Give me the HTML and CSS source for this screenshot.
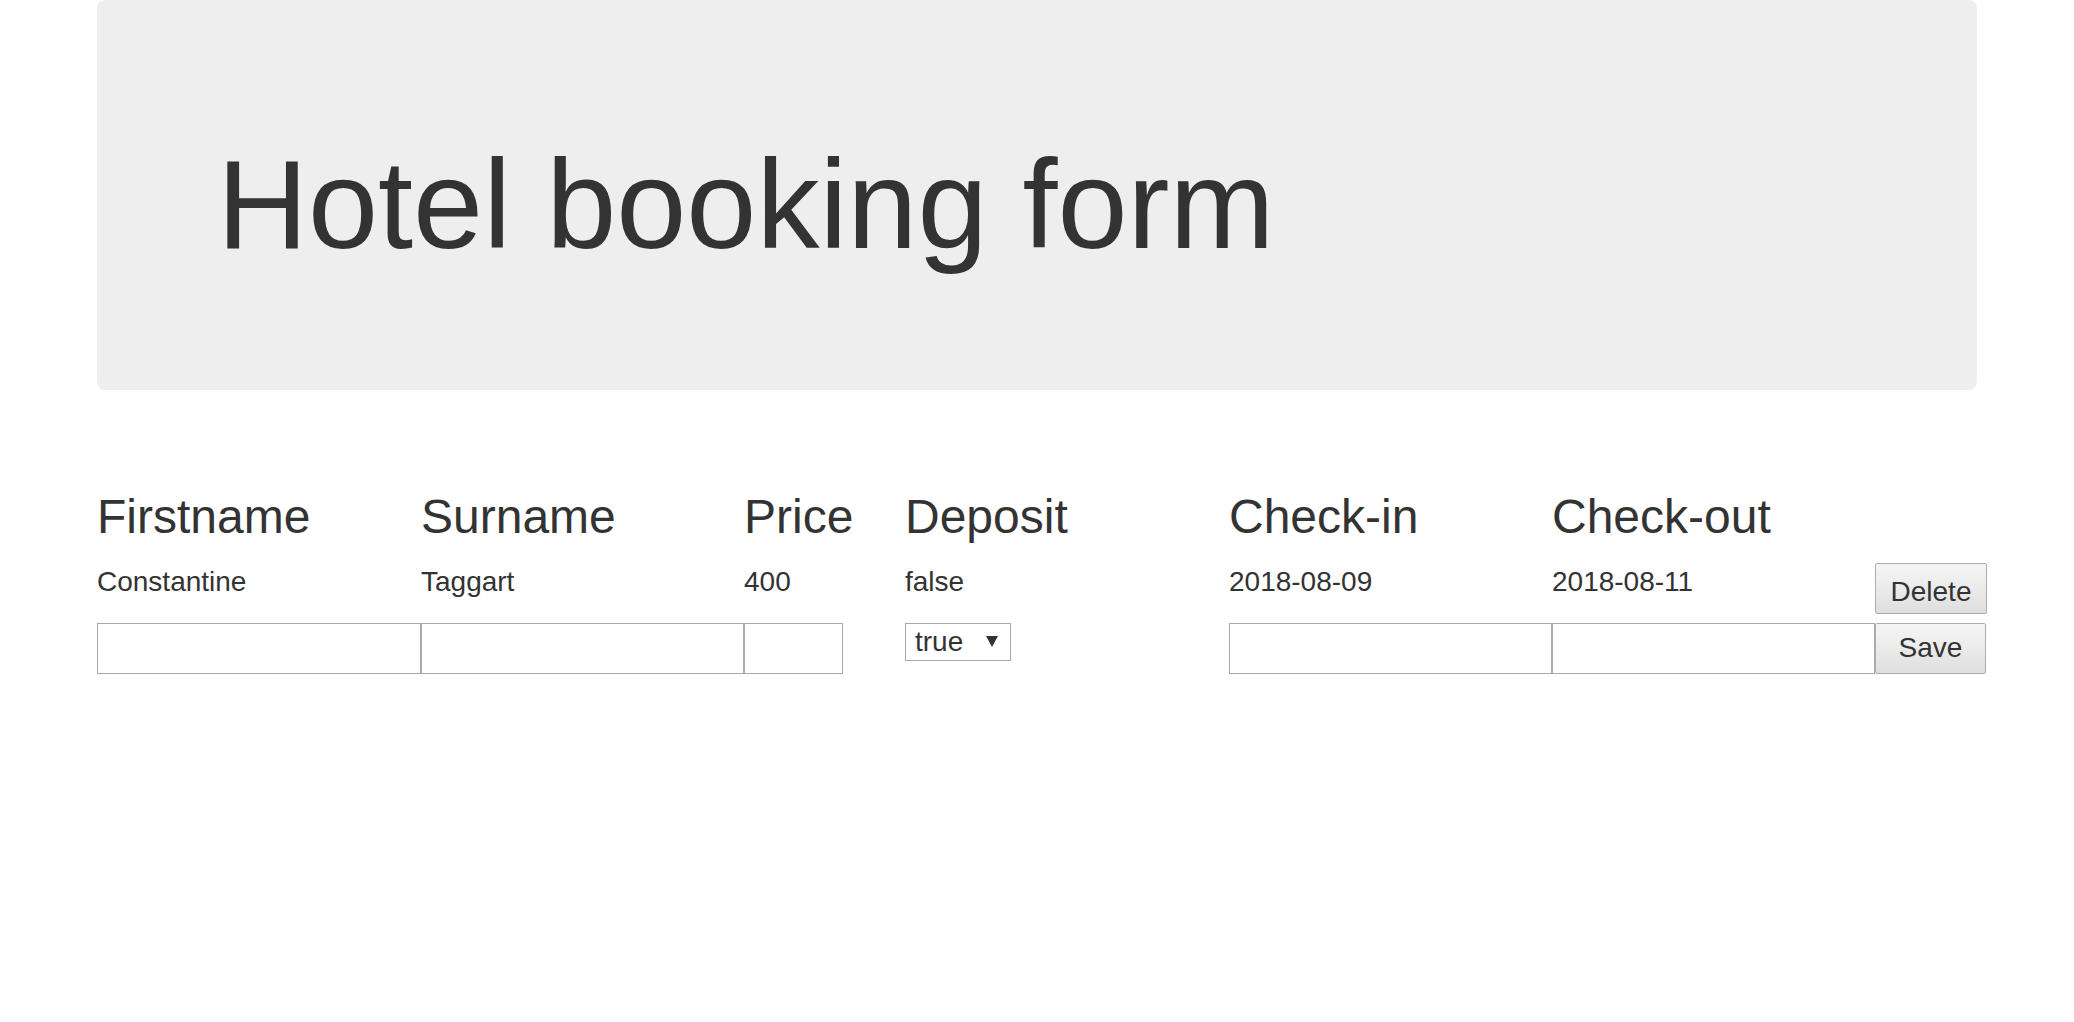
FILE: index.html
```html
<!DOCTYPE html>
<html lang="en">
<head>
<meta charset="utf-8">
<title>Hotel booking form</title>
<link rel="stylesheet" href="styles.css">
</head>
<body>
<div class="container">
  <div class="jumbotron">
    <h1 class="title">Hotel booking form</h1>
  </div>

  <div class="bookings">
    <h2 class="col-head">Firstname</h2>
    <h2 class="col-head">Surname</h2>
    <h2 class="col-head">Price</h2>
    <h2 class="col-head">Deposit</h2>
    <h2 class="col-head">Check-in</h2>
    <h2 class="col-head">Check-out</h2>
    <div class="col-head"></div>

    <div class="cell">Constantine</div>
    <div class="cell">Taggart</div>
    <div class="cell">400</div>
    <div class="cell">false</div>
    <div class="cell">2018-08-09</div>
    <div class="cell">2018-08-11</div>
    <div class="cell"><button class="btn btn-delete" type="button">Delete</button></div>

    <div class="cell"><input class="field" type="text"></div>
    <div class="cell"><input class="field" type="text"></div>
    <div class="cell"><input class="field field-price" type="text"></div>
    <div class="cell">
      <label class="select-wrap">
        <select class="select">
          <option>true</option>
          <option>false</option>
        </select>
      </label>
    </div>
    <div class="cell"><input class="field" type="text"></div>
    <div class="cell"><input class="field" type="text"></div>
    <div class="cell"><button class="btn btn-save" type="button">Save</button></div>
  </div>
</div>
</body>
</html>
```

FILE: styles.css
```css
html, body {
  margin: 0;
  padding: 0;
  background: #fff;
}

body {
  font-family: "Liberation Sans", Arial, Helvetica, sans-serif;
  color: #333;
}

.container {
  width: 1880px;
  margin: 0 auto;
}

.jumbotron {
  background: #eee;
  border-radius: 8px;
  padding: 135px 0 116px 120px;
}

.title {
  margin: 0;
  font-size: 126px;
  line-height: 139px;
  font-weight: normal;
  color: #333;
}

.bookings {
  margin-top: 100px;
  display: grid;
  grid-template-columns: 324px 323px 161px 324px 323px 323px 112px;
  grid-template-rows: 73px 60px 51px;
}

.col-head {
  margin: 0;
  font-size: 48px;
  line-height: 53px;
  font-weight: normal;
  color: #333;
}

.cell {
  font-size: 28px;
  line-height: 37.5px;
}

.field {
  display: block;
  box-sizing: border-box;
  width: 100%;
  height: 51px;
  margin: 0;
  padding: 0 8px;
  border: 1px solid #a9a9a9;
  background: #fff;
  font: 28px "Liberation Sans", Arial, sans-serif;
  color: #333;
}

.field-price {
  width: 99px;
}

.select-wrap {
  position: relative;
  display: inline-block;
  vertical-align: top;
}

.select-wrap::after {
  content: "";
  position: absolute;
  left: 81px;
  top: 13px;
  width: 0;
  height: 0;
  border-left: 6px solid transparent;
  border-right: 6px solid transparent;
  border-top: 11px solid #333;
  pointer-events: none;
}

.select {
  -webkit-appearance: none;
  appearance: none;
  display: block;
  box-sizing: border-box;
  width: 106px;
  height: 38px;
  margin: 0;
  padding: 0 0 0 9px;
  border: 1px solid #a9a9a9;
  border-radius: 0;
  background: #fff;
  font: 28px "Liberation Sans", Arial, sans-serif;
  line-height: 36px;
  color: #333;
}

.btn {
  display: block;
  box-sizing: border-box;
  width: 100%;
  height: 51px;
  margin: 0;
  border: 1px solid #adadad;
  border-radius: 2px;
  background: linear-gradient(to bottom, #f5f5f5 0%, #ebebeb 50%, #dedede 100%);
  font: 28px "Liberation Sans", Arial, sans-serif;
  line-height: 31px;
  color: #333;
}

.btn-delete {
  padding: 5px 0 0;
}

.btn-save {
  width: 111px;
  padding: 0 0 2px;
}
```
